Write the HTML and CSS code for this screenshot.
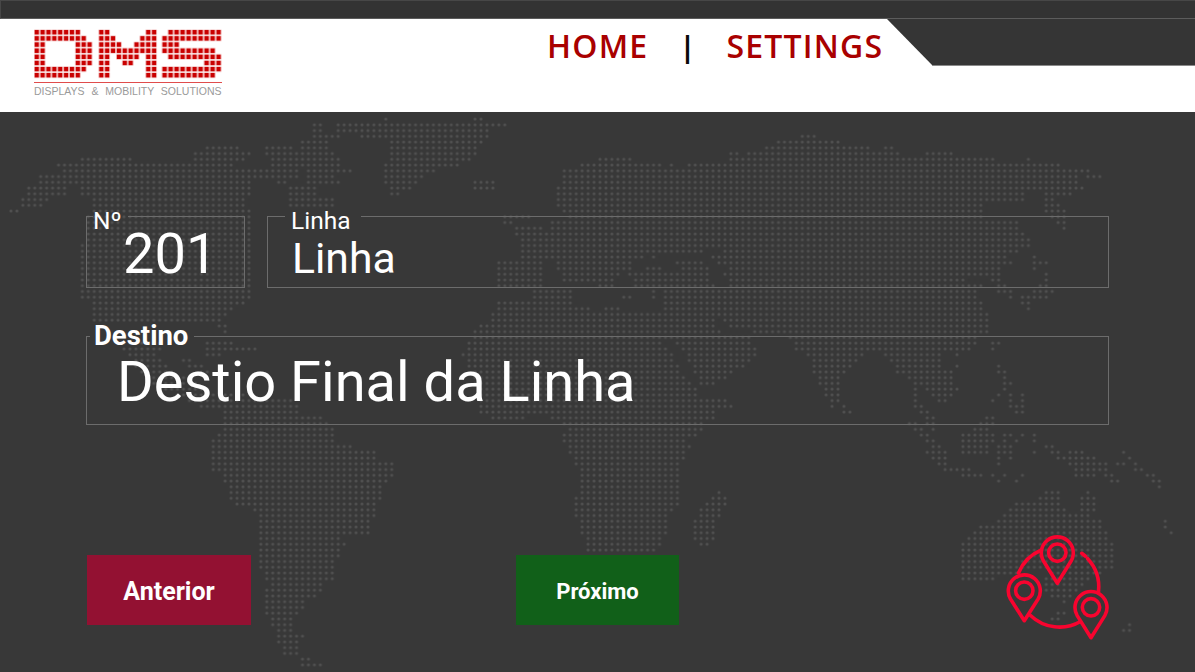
FILE: index.html
```html
<!DOCTYPE html>
<html lang="pt">
<head>
<meta charset="utf-8">
<title>DMS</title>
<link rel="stylesheet" href="styles.css">
</head>
<body>
<div class="top-strip"></div>
<header class="header">
  <div class="logo">
    <svg class="logo-dots" viewBox="34 29 188 52" width="188" height="52" aria-hidden="true">
      <defs>
        <pattern id="logo-px" patternUnits="userSpaceOnUse" width="1" height="1">
          <rect x="0.06" y="0.06" width="0.88" height="0.88" fill="#f0b4b4"/>
          <rect x="0.14" y="0.14" width="0.72" height="0.72" fill="#c90000"/>
        </pattern>
      </defs>
      <g transform="translate(33.8 29.2) scale(5.87 6.14)">
        <path fill="url(#logo-px)" d="M0 0h8v1h-8zM0 1h9v1h-9zM0 2h2v4h-2zM7 2h3v4h-3zM0 6h9v1h-9zM0 7h8v1h-8z
        M11 0h2v8h-2zM19 0h2v8h-2zM13 1h1v3h-1zM18 1h1v3h-1zM14 2h1v3h-1zM17 2h1v3h-1zM15 3h2v3h-2z"/>
      </g>
      <g transform="translate(161.6 29.2) scale(6 6.14)">
        <path fill="url(#logo-px)" d="M1 0h9v1h-9zM0 1h10v1h-10zM0 2h3v1h-3zM0 3h9v1h-9zM1 4h9v1h-9zM7 5h3v1h-3zM0 6h10v1h-10zM0 7h9v1h-9z"/>
      </g>
    </svg>
    <div class="logo-caption">DISPLAYS &amp; MOBILITY SOLUTIONS</div>
  </div>
  <nav class="nav">
    <a class="nav-link">HOME</a>
    <span class="nav-sep">|</span>
    <a class="nav-link">SETTINGS</a>
  </nav>
  <div class="notch"></div>
</header>
<main class="main">
  <svg class="world" viewBox="0 112 1195 560" width="1195" height="560" aria-hidden="true">
    <defs>
      <pattern id="dots" patternUnits="userSpaceOnUse" width="1" height="1">
        <circle cx="0.5" cy="0.5" r="0.26" fill="#505050"/>
      </pattern>
    </defs>
    <g transform="translate(2.025 116.2) scale(5.95 5.745)">
      <path fill="url(#dots)" d="M64 0h1v1h-1zM79 0h2v1h-2z
M52 1h2v1h-2zM56 1h29v1h-29z
M52 2h2v1h-2zM56 2h26v1h-26z
M52 3h5v1h-5zM60 3h22v1h-22zM134 3h3v1h-3z
M50 4h5v1h-5zM65 4h16v1h-16zM130 4h11v1h-11z
M34 5h6v1h-6zM44 5h5v1h-5zM50 5h5v1h-5zM65 5h15v1h-15zM128 5h18v1h-18zM148 5h2v1h-2z
M32 6h10v1h-10zM44 6h5v1h-5zM49 6h7v1h-7zM65 6h15v1h-15zM122 6h2v1h-2zM125 6h26v1h-26zM155 6h5v1h-5z
M13 7h9v1h-9zM32 7h9v1h-9zM45 7h12v1h-12zM65 7h14v1h-14zM100 7h6v1h-6zM122 7h45v1h-45zM172 7h1v1h-1z
M9 8h30v1h-30zM45 8h12v1h-12zM64 8h13v1h-13zM97 8h14v1h-14zM112 8h1v1h-1zM115 8h63v1h-63z
M10 9h40v1h-40zM51 9h8v1h-8zM64 9h9v1h-9zM94 9h89v1h-89z
M6 10h44v1h-44zM51 10h5v1h-5zM64 10h7v1h-7zM94 10h87v1h-87zM182 10h3v1h-3z
M6 11h36v1h-36zM46 11h2v1h-2zM51 11h6v1h-6zM64 11h6v1h-6zM79 11h4v1h-4zM94 11h87v1h-87z
M4 12h7v1h-7zM13 12h29v1h-29zM48 12h5v1h-5zM65 12h4v1h-4zM79 12h4v1h-4zM93 12h89v1h-89z
M4 13h7v1h-7zM13 13h29v1h-29zM48 13h5v1h-5zM65 13h2v1h-2zM93 13h79v1h-79zM175 13h5v1h-5z
M3 14h5v1h-5zM15 14h26v1h-26zM48 14h8v1h-8zM93 14h79v1h-79zM175 14h2v1h-2z
M3 15h4v1h-4zM15 15h26v1h-26zM48 15h8v1h-8zM93 15h72v1h-72zM175 15h3v1h-3z
M1 16h2v1h-2zM15 16h27v1h-27zM94 16h71v1h-71zM175 16h4v1h-4z
M14 17h28v1h-28zM84 17h5v1h-5zM95 17h70v1h-70zM176 17h3v1h-3z
M14 18h28v1h-28zM84 18h2v1h-2zM92 18h79v1h-79zM177 18h2v1h-2z
M14 19h28v1h-28zM86 19h5v1h-5zM92 19h79v1h-79zM178 19h1v1h-1z
M14 20h28v1h-28zM86 20h86v1h-86z
M14 21h28v1h-28zM87 21h86v1h-86z
M13 22h29v1h-29zM87 22h86v1h-86z
M13 23h29v1h-29zM87 23h31v1h-31zM121 23h50v1h-50z
M13 24h29v1h-29zM87 24h21v1h-21zM109 24h1v1h-1zM119 24h50v1h-50zM173 24h1v1h-1z
M13 25h29v1h-29zM83 25h8v1h-8zM93 25h13v1h-13zM113 25h5v1h-5zM120 25h50v1h-50zM173 25h3v1h-3z
M13 26h29v1h-29zM83 26h8v1h-8zM93 26h13v1h-13zM108 26h3v1h-3zM114 26h5v1h-5zM122 26h46v1h-46zM173 26h1v1h-1z
M13 27h29v1h-29zM83 27h8v1h-8zM94 27h10v1h-10zM105 27h14v1h-14zM121 27h47v1h-47zM175 27h1v1h-1z
M13 28h29v1h-29zM83 28h8v1h-8zM94 28h9v1h-9zM106 28h13v1h-13zM122 28h40v1h-40zM166 28h2v1h-2zM175 28h1v1h-1z
M13 29h29v1h-29zM83 29h8v1h-8zM100 29h3v1h-3zM106 29h14v1h-14zM122 29h43v1h-43zM167 29h2v1h-2zM174 29h2v1h-2z
M13 30h29v1h-29zM89 30h7v1h-7zM109 30h1v1h-1zM111 30h53v1h-53zM167 30h3v1h-3zM173 30h4v1h-4z
M13 31h29v1h-29zM89 31h7v1h-7zM104 31h2v1h-2zM109 31h1v1h-1zM111 31h53v1h-53zM169 31h1v1h-1zM171 31h5v1h-5z
M15 32h26v1h-26zM83 32h13v1h-13zM111 32h54v1h-54zM171 32h2v1h-2z
M15 33h24v1h-24zM83 33h16v1h-16zM101 33h3v1h-3zM111 33h54v1h-54zM172 33h1v1h-1z
M15 34h23v1h-23zM82 34h84v1h-84z
M15 35h22v1h-22zM82 35h38v1h-38zM121 35h45v1h-45z
M36 36h2v1h-2zM80 36h40v1h-40zM122 36h44v1h-44z
M37 37h1v1h-1zM79 37h42v1h-42zM126 37h40v1h-40z
M79 38h47v1h-47zM132 38h32v1h-32z
M20 39h7v1h-7zM34 39h5v1h-5zM78 39h33v1h-33zM113 39h13v1h-13zM133 39h31v1h-31zM166 39h2v1h-2z
M20 40h7v1h-7zM34 40h9v1h-9zM78 40h34v1h-34zM114 40h13v1h-13zM133 40h30v1h-30zM166 40h1v1h-1z
M21 41h5v1h-5zM34 41h3v1h-3zM77 41h36v1h-36zM115 41h12v1h-12zM135 41h10v1h-10zM148 41h10v1h-10zM160 41h1v1h-1z
M22 42h5v1h-5zM30 42h2v1h-2zM78 42h35v1h-35zM115 42h11v1h-11zM136 42h8v1h-8zM149 42h9v1h-9z
M22 43h6v1h-6zM31 43h3v1h-3zM78 43h36v1h-36zM116 43h9v1h-9zM136 43h7v1h-7zM150 43h8v1h-8zM160 43h1v1h-1zM167 43h1v1h-1z
M23 44h6v1h-6zM33 44h2v1h-2zM79 44h35v1h-35zM116 44h7v1h-7zM136 44h6v1h-6zM150 44h10v1h-10zM167 44h2v1h-2z
M24 45h7v1h-7zM79 45h36v1h-36zM117 45h5v1h-5zM137 45h4v1h-4zM152 45h8v1h-8zM168 45h1v1h-1z
M25 46h8v1h-8zM79 46h37v1h-37zM117 46h3v1h-3zM137 46h4v1h-4zM153 46h7v1h-7zM168 46h2v1h-2z
M27 47h8v1h-8zM80 47h37v1h-37zM138 47h3v1h-3zM153 47h1v1h-1zM155 47h6v1h-6zM168 47h1v1h-1z
M29 48h12v1h-12zM80 48h37v1h-37zM138 48h3v1h-3zM153 48h1v1h-1zM156 48h4v1h-4zM167 48h1v1h-1zM169 48h1v1h-1zM171 48h1v1h-1z
M31 49h18v1h-18zM80 49h42v1h-42zM139 49h2v1h-2zM153 49h1v1h-1zM157 49h2v1h-2zM166 49h1v1h-1zM169 49h1v1h-1zM171 49h1v1h-1z
M33 50h17v1h-17zM80 50h43v1h-43zM139 50h1v1h-1zM141 50h1v1h-1zM153 50h2v1h-2zM169 50h3v1h-3z
M37 51h13v1h-13zM80 51h40v1h-40zM141 51h2v1h-2zM154 51h2v1h-2zM170 51h2v1h-2z
M37 52h17v1h-17zM82 52h6v1h-6zM92 52h28v1h-28zM155 52h2v1h-2zM165 52h2v1h-2z
M37 53h18v1h-18zM94 53h24v1h-24zM152 53h2v1h-2zM155 53h2v1h-2zM164 53h3v1h-3z
M37 54h19v1h-19zM95 54h23v1h-23zM153 54h2v1h-2zM156 54h1v1h-1zM163 54h3v1h-3z
M36 55h20v1h-20zM94 55h23v1h-23zM154 55h2v1h-2zM161 55h6v1h-6zM168 55h2v1h-2zM171 55h1v1h-1zM173 55h1v1h-1z
M35 56h21v1h-21zM94 56h21v1h-21zM155 56h2v1h-2zM161 56h6v1h-6zM168 56h1v1h-1zM170 56h1v1h-1zM173 56h1v1h-1z
M35 57h24v1h-24zM95 57h21v1h-21zM156 57h2v1h-2zM161 57h5v1h-5zM167 57h3v1h-3zM175 57h2v1h-2z
M35 58h28v1h-28zM95 58h20v1h-20zM155 58h4v1h-4zM161 58h5v1h-5zM167 58h3v1h-3zM173 58h1v1h-1zM176 58h2v1h-2zM179 58h3v1h-3zM188 58h1v1h-1z
M35 59h28v1h-28zM96 59h19v1h-19zM156 59h3v1h-3zM167 59h1v1h-1zM169 59h1v1h-1zM177 59h7v1h-7zM189 59h1v1h-1z
M35 60h31v1h-31zM96 60h18v1h-18zM157 60h2v1h-2zM167 60h1v1h-1zM179 60h7v1h-7zM187 60h2v1h-2zM190 60h1v1h-1z
M35 61h31v1h-31zM97 61h17v1h-17zM158 61h5v1h-5zM180 61h6v1h-6zM190 61h2v1h-2z
M37 62h29v1h-29zM97 62h17v1h-17zM161 62h4v1h-4zM166 62h1v1h-1zM168 62h1v1h-1zM171 62h1v1h-1zM180 62h4v1h-4zM185 62h2v1h-2zM192 62h2v1h-2z
M37 63h28v1h-28zM97 63h17v1h-17zM167 63h1v1h-1zM170 63h1v1h-1zM186 63h2v1h-2zM193 63h2v1h-2z
M38 64h26v1h-26zM97 64h17v1h-17zM194 64h1v1h-1z
M38 65h26v1h-26zM97 65h17v1h-17zM120 65h1v1h-1zM175 65h3v1h-3zM182 65h1v1h-1z
M38 66h26v1h-26zM96 66h18v1h-18zM119 66h3v1h-3zM174 66h4v1h-4zM181 66h3v1h-3z
M39 67h24v1h-24zM96 67h18v1h-18zM118 67h4v1h-4zM170 67h8v1h-8zM181 67h3v1h-3z
M42 68h21v1h-21zM96 68h17v1h-17zM117 68h4v1h-4zM169 68h10v1h-10zM181 68h3v1h-3z
M43 69h20v1h-20zM96 69h16v1h-16zM117 69h4v1h-4zM168 69h15v1h-15z
M43 70h19v1h-19zM97 70h15v1h-15zM116 70h4v1h-4zM167 70h18v1h-18zM195 70h1v1h-1z
M43 71h19v1h-19zM97 71h15v1h-15zM116 71h4v1h-4zM164 71h21v1h-21zM195 71h1v1h-1z
M43 72h19v1h-19zM97 72h15v1h-15zM116 72h4v1h-4zM163 72h23v1h-23zM196 72h1v1h-1z
M43 73h14v1h-14zM98 73h13v1h-13zM116 73h4v1h-4zM162 73h24v1h-24z
M43 74h15v1h-15zM98 74h13v1h-13zM117 74h2v1h-2zM161 74h26v1h-26z
M43 75h14v1h-14zM98 75h12v1h-12zM161 75h26v1h-26z
M43 76h14v1h-14zM161 76h26v1h-26z
M43 77h13v1h-13zM161 77h26v1h-26z
M43 78h13v1h-13zM161 78h26v1h-26z
M44 79h12v1h-12zM161 79h10v1h-10zM176 79h9v1h-9z
M44 80h12v1h-12zM161 80h6v1h-6zM175 80h8v1h-8z
M45 81h9v1h-9zM175 81h7v1h-7z
M44 82h10v1h-10zM175 82h6v1h-6z
M44 83h9v1h-9zM176 83h4v1h-4z
M44 84h7v1h-7zM178 84h1v1h-1z
M44 85h7v1h-7z
M44 86h6v1h-6zM177 86h2v1h-2z
M45 87h4v1h-4zM176 87h2v1h-2z
M45 88h4v1h-4zM189 88h1v1h-1z
M46 89h3v1h-3zM188 89h2v1h-2z
M46 90h5v1h-5z
M46 91h4v1h-4z
M47 92h3v1h-3z
M47 93h3v1h-3z
M50 94h2v1h-2z
M50 95h4v1h-4z"/>
    </g>
  </svg>
  <div class="content">
    <div class="form-row">
      <fieldset class="field field-number">
        <legend class="field-label">Nº</legend>
        <div class="value value-number">201</div>
      </fieldset>
      <fieldset class="field field-line">
        <legend class="field-label">Linha</legend>
        <div class="value value-line">Linha</div>
      </fieldset>
    </div>
    <fieldset class="field field-dest">
      <legend class="field-label-bold">Destino</legend>
      <div class="value value-dest">Destio Final da Linha</div>
    </fieldset>
    <div class="actions">
      <button class="btn btn-prev">Anterior</button>
      <button class="btn btn-next">Próximo</button>
      <svg class="pins" viewBox="1004 532 108 108" width="108" height="108" aria-hidden="true">
        <g fill="none" stroke="#f8042f" stroke-width="3.6" stroke-linecap="round" stroke-linejoin="round">
          <path d="M1081.7 553.3L1085.5 556.2"/>
          <path d="M1087.5 558.5A42 42 0 0 1 1098.5 591.5"/>
          <path d="M1080.5 621.5A42 42 0 0 1 1030.5 615.5"/>
          <path d="M1018.5 573A42 42 0 0 1 1041.5 550"/>
          <path d="M1057.3 583.3L1043.5 561A16 16 0 1 1 1071.1 561Z"/>
          <circle cx="1057.3" cy="552.7" r="8.7"/>
          <path d="M1024.3 620.7L1010.5 599A16 16 0 1 1 1038.1 599Z"/>
          <circle cx="1024.3" cy="590.7" r="8.7"/>
          <path d="M1091 637.7L1077.2 615.6A16 16 0 1 1 1104.8 615.6Z"/>
          <circle cx="1091" cy="607.3" r="8.7"/>
        </g>
      </svg>
    </div>
  </div>
</main>
</body>
</html>
```
FILE: styles.css
```css
* {
  box-sizing: border-box;
}

html,
body {
  margin: 0;
  height: 100%;
}

body {
  width: 1195px;
  height: 672px;
  overflow: hidden;
  background: #383838;
  font-family: Roboto, "Liberation Sans", sans-serif;
  color: #fff;
}

.top-strip {
  height: 19px;
  background: #333;
  border-top: 1px solid #474747;
  border-left: 1px solid #474747;
  border-bottom: 1px solid #5c5c5c;
}

.header {
  position: relative;
  display: flex;
  align-items: flex-start;
  height: 93px;
  padding-left: 34px;
  background: #fff;
}

.logo {
  flex: none;
  width: 188px;
  margin-top: 10px;
}

.logo-dots {
  display: block;
}

.logo-caption {
  margin-top: 1px;
  padding-top: 2px;
  border-top: 1px solid #e04c4c;
  font-family: "Liberation Sans", Arial, sans-serif;
  font-size: 10.5px;
  line-height: 12px;
  word-spacing: 3.9px;
  white-space: nowrap;
  color: #9a9a9a;
}

.nav {
  display: flex;
  align-items: center;
  gap: 31px;
  margin-left: 325px;
  margin-top: 7px;
  font-family: "Open Sans", Inter, sans-serif;
  font-size: 32px;
  line-height: 40px;
  font-weight: 600;
  letter-spacing: 1.2px;
}

.nav-link {
  color: #a90000;
  white-space: nowrap;
}

.nav-sep {
  color: #0a0a0a;
  font-size: 29px;
  font-weight: 700;
  letter-spacing: 0;
}

.notch {
  position: absolute;
  top: 0;
  right: 0;
  width: 308px;
  height: 47px;
  background: #353535;
  border-bottom: 1px solid #8a8a8a;
  clip-path: polygon(0 0, 100% 0, 100% 100%, 46px 100%);
}

.main {
  position: relative;
  height: 560px;
}

.world {
  position: absolute;
  top: 0;
  left: 0;
}

.content {
  position: relative;
  padding: 88px 86px 0;
}

.form-row {
  display: flex;
  gap: 22px;
  margin-bottom: 33px;
}

.field {
  min-width: 0;
  margin: 0;
  padding: 0;
  border: 1px solid #6c6c6c;
}

.field-number {
  width: 159px;
  height: 88px;
  padding-left: 6px;
}

.field-line {
  flex: 1;
  height: 88px;
  padding-left: 17px;
}

.field-dest {
  height: 104px;
  padding-left: 3px;
}

.field-label {
  padding: 8px 6px 0 0;
  font-size: 24.5px;
  line-height: 25px;
}

.field-line .field-label {
  padding-left: 6px;
  padding-right: 10px;
}

.field-label-bold {
  padding: 0 6px 0 4px;
  font-size: 27.5px;
  line-height: 30px;
  font-weight: 700;
}

.value {
  white-space: nowrap;
}

.value-number {
  margin-top: -9px;
  padding-left: 30px;
  font-size: 56px;
  line-height: 60px;
}

.value-line {
  margin-top: 4px;
  padding-left: 7px;
  font-size: 42.7px;
  line-height: 42px;
}

.value-dest {
  margin-top: -1px;
  padding-left: 27px;
  font-size: 56px;
  line-height: 64px;
}

.actions {
  display: flex;
  align-items: flex-start;
  margin-top: 130px;
  padding-left: 1px;
}

.btn {
  display: block;
  flex: none;
  height: 70px;
  padding: 2px 0 0;
  border: 0;
  color: #fff;
  font-family: inherit;
  font-weight: 700;
}

.btn-prev {
  width: 164px;
  margin-right: 265px;
  background: #931132;
  font-size: 25px;
}

.btn-next {
  width: 163px;
  background: #116019;
  font-size: 22px;
}

.pins {
  display: block;
  flex: none;
  margin-top: -23px;
  margin-left: 325px;
}
```
